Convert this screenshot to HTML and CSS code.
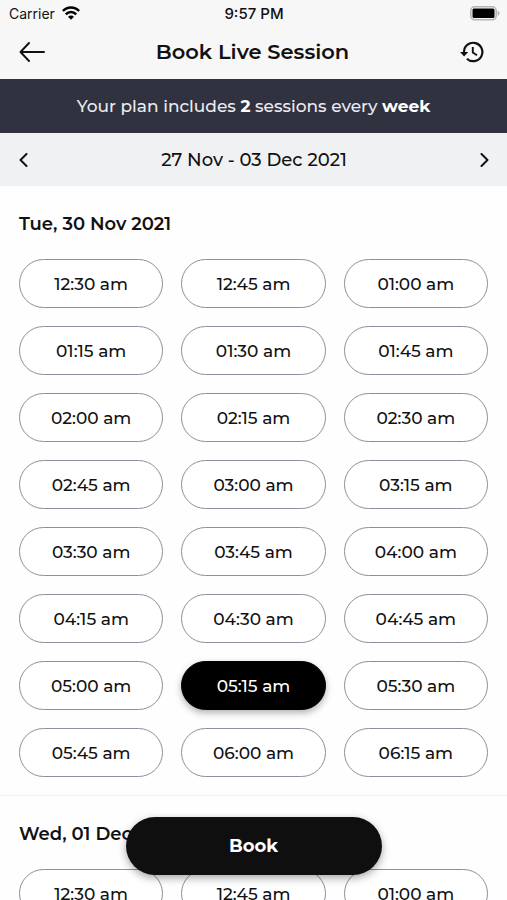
FILE: index.html
```html
<!DOCTYPE html>
<html lang="en">
<head>
<meta charset="utf-8">
<meta name="viewport" content="width=device-width, initial-scale=1">
<title>Book Live Session</title>
<link rel="stylesheet" href="styles.css">
</head>
<body>
<div class="app">
  <header class="top">
    <div class="status">
      <div class="carrier">
        <span>Carrier</span>
        <svg width="18" height="14" viewBox="0 0 18 14" fill="none" stroke="#000" stroke-width="2.5" aria-hidden="true">
          <path d="M.9 5C5.300.3 12.700.3 17.100 5M3.800 8.300c2.900-3 7.500-3 10.400 0"/>
          <path d="M9 13.800 6 10.800c1.700-1.600 4.300-1.600 6 0z" fill="#000" stroke="none"/>
        </svg>
      </div>
      <span class="clock">9:57 PM</span>
      <svg class="battery" width="31" height="15" viewBox="0 0 31 15" aria-hidden="true">
        <rect x=".8" y=".8" width="25.400" height="13" rx="4" fill="#f7f7f7" stroke="#b5b5b5" stroke-width="1.600"/>
        <rect x="2.500" y="2.500" width="22" height="9.600" rx="1.500" fill="#000"/>
        <path d="M27.600 4.800c2.600.6 2.600 4.400 0 5z" fill="#b5b5b5"/>
      </svg>
    </div>
    <div class="titlebar">
      <button class="icon-button" type="button" aria-label="Back">
        <svg width="26" height="20" viewBox="0 0 26 20" fill="none" stroke="#111" stroke-width="1.900" stroke-linecap="round" stroke-linejoin="round"><path d="M25 10H1.500M10 1 1.500 10l8.500 9"/></svg>
      </button>
      <h1>Book Live Session</h1>
      <button class="icon-button" type="button" aria-label="Session history">
        <svg width="24" height="22" viewBox="0 0 24 22" fill="none" stroke="#111" stroke-width="2.200"><path d="M4 12v-1a9.200 9.200 0 1 1 2.900 6.700"/><path d="M0 11h8.200L4.100 15.500z" fill="#111" stroke="none"/><path d="M12.800 6v5.500l4.200 2.700" stroke-width="1.900"/></svg>
      </button>
    </div>
  </header>
  <p class="plan">Your plan includes <strong>2</strong> sessions every <strong>week</strong></p>
  <nav class="week" aria-label="Week">
    <button class="icon-button" type="button" aria-label="Previous week">
      <svg width="9" height="14" viewBox="0 0 9 14" fill="none" stroke="#111" stroke-width="2" stroke-linecap="round" stroke-linejoin="round"><path d="M7.500 1 1.500 7l6 6"/></svg>
    </button>
    <span>27 Nov - 03 Dec 2021</span>
    <button class="icon-button" type="button" aria-label="Next week">
      <svg width="9" height="14" viewBox="0 0 9 14" fill="none" stroke="#111" stroke-width="2" stroke-linecap="round" stroke-linejoin="round"><path d="m1.500 1 6 6-6 6"/></svg>
    </button>
  </nav>
  <main class="days">
    <section class="day">
      <h2>Tue, 30 Nov 2021</h2>
      <div class="slots">
        <button class="slot" type="button">12:30 am</button>
        <button class="slot" type="button">12:45 am</button>
        <button class="slot" type="button">01:00 am</button>
        <button class="slot" type="button">01:15 am</button>
        <button class="slot" type="button">01:30 am</button>
        <button class="slot" type="button">01:45 am</button>
        <button class="slot" type="button">02:00 am</button>
        <button class="slot" type="button">02:15 am</button>
        <button class="slot" type="button">02:30 am</button>
        <button class="slot" type="button">02:45 am</button>
        <button class="slot" type="button">03:00 am</button>
        <button class="slot" type="button">03:15 am</button>
        <button class="slot" type="button">03:30 am</button>
        <button class="slot" type="button">03:45 am</button>
        <button class="slot" type="button">04:00 am</button>
        <button class="slot" type="button">04:15 am</button>
        <button class="slot" type="button">04:30 am</button>
        <button class="slot" type="button">04:45 am</button>
        <button class="slot" type="button">05:00 am</button>
        <button class="slot selected" type="button" aria-pressed="true">05:15 am</button>
        <button class="slot" type="button">05:30 am</button>
        <button class="slot" type="button">05:45 am</button>
        <button class="slot" type="button">06:00 am</button>
        <button class="slot" type="button">06:15 am</button>
      </div>
    </section>
    <section class="day">
      <h2>Wed, 01 Dec 2021</h2>
      <div class="slots">
        <button class="slot" type="button">12:30 am</button>
        <button class="slot" type="button">12:45 am</button>
        <button class="slot" type="button">01:00 am</button>
      </div>
    </section>
  </main>
  <button class="book" type="button">Book</button>
</div>
</body>
</html>
```
FILE: styles.css
```css
* { box-sizing: border-box; }

body {
  margin: 0;
  background: #fefefe;
  color: #111;
  font-family: Montserrat, Inter, "Liberation Sans", sans-serif;
  font-size: 17px;
  font-weight: 500;
}

h1, h2, p { margin: 0; }

button {
  font: inherit;
  color: inherit;
  cursor: pointer;
}

svg { display: block; }

.app {
  position: relative;
  display: flex;
  flex-direction: column;
  height: 100vh;
  overflow: hidden;
}

.top, .plan, .week { flex: none; }

.top { background: #f7f7f7; }

.status {
  display: grid;
  grid-template-columns: 1fr auto 1fr;
  align-items: center;
  height: 26px;
  padding: 0 8px 0 9px;
  font-family: Inter, "Liberation Sans", sans-serif;
  font-size: 14px;
  font-weight: 400;
}

.carrier {
  display: flex;
  align-items: center;
  gap: 7px;
}

.clock {
  font-size: 15px;
  font-weight: 500;
}

.battery {
  justify-self: end;
  margin-right: -2px;
}

.titlebar {
  display: flex;
  align-items: center;
  justify-content: space-between;
  height: 53px;
  padding: 0 23px 2px 19px;
}

.titlebar h1 {
  font-size: 21px;
  font-weight: 600;
}

.icon-button {
  padding: 0;
  border: 0;
  background: none;
}

.plan {
  height: 54px;
  line-height: 54px;
  background: #313240;
  color: #ececf0;
  text-align: center;
}

.plan strong {
  color: #fff;
  font-weight: 700;
}

.week {
  display: flex;
  align-items: center;
  justify-content: space-between;
  height: 53px;
  padding: 0 18px 0 19px;
  background: #f0f1f3;
  font-size: 18px;
}

.days {
  flex: 1;
  min-height: 0;
  overflow-y: auto;
  scrollbar-width: none;
}

.day {
  padding: 25px 19px 18px;
  border-bottom: 1px solid #eeeff0;
}

.day h2 {
  margin-bottom: 22px;
  font-size: 18px;
  line-height: 26px;
  font-weight: 600;
}

.slots {
  display: grid;
  grid-template-columns: repeat(3, 1fr);
  gap: 18px;
}

.slot {
  height: 49px;
  padding: 0;
  border: 1px solid #8e8f9d;
  border-radius: 25px;
  background: #fff;
}

.slot.selected {
  border-color: #000;
  background: #000;
  color: #fff;
  box-shadow: 0 3px 7px rgba(0, 0, 0, 0.3);
}

.book {
  position: absolute;
  bottom: 25px;
  left: 50%;
  width: 256px;
  height: 58px;
  transform: translateX(-50%);
  border: 0;
  border-radius: 29px;
  background: #0f0f0f;
  color: #fff;
  font-size: 18px;
  font-weight: 700;
  box-shadow: 0 3px 8px rgba(0, 0, 0, 0.35);
}
```
